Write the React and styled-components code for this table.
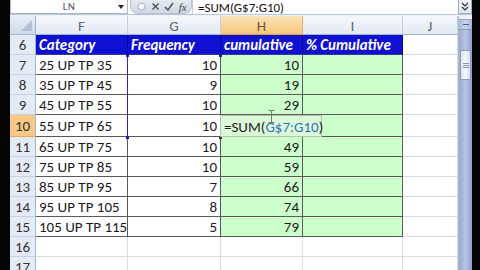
import React from "react";
import styled, { createGlobalStyle } from "styled-components";

const Global = createGlobalStyle`
  html, body { margin: 0; padding: 0; background: #000; }
  * { box-sizing: border-box; }
`;

const FONT = `"Carlito", "Liberation Sans", Arial, sans-serif`;

const Screen = styled.div`
  width: 480px;
  height: 270px;
  overflow: hidden;
  background: #000;
  display: flex;
  font-family: ${FONT};
`;

const LeftEdge = styled.div`
  width: 10px;
  flex: none;
  background: #050505;
`;

const Window = styled.div`
  width: 462px;
  flex: none;
  display: flex;
  flex-direction: column;
  background: #fff;
`;

const FormulaBar = styled.div`
  height: 15px;
  flex: none;
  display: flex;
  align-items: stretch;
  background: #fff;
  border-bottom: 1px solid #b9c6d8;
`;

const NameBox = styled.div`
  width: 118px;
  flex: none;
  position: relative;
  display: flex;
  align-items: center;
  justify-content: center;
  border: 1px solid #a9b7c9;
  border-top: none;
  font-size: 11px;
  color: #556;
  letter-spacing: 0.5px;
`;

const DropArrow = styled.span`
  position: absolute;
  right: 3px;
  top: 5px;
  width: 0;
  height: 0;
  border-left: 3px solid transparent;
  border-right: 3px solid transparent;
  border-top: 4px solid #222;
`;

const FxPill = styled.div`
  width: 62px;
  flex: none;
  margin-left: 2px;
  display: flex;
  align-items: center;
  justify-content: space-around;
  padding: 0 2px 0 4px;
  border-radius: 0 0 8px 8px;
  background: linear-gradient(#e6ebf2, #cfd8e4);
  border: 1px solid #b7c3d3;
  border-top: none;
`;

const FxLabel = styled.span`
  font-family: "Liberation Serif", serif;
  font-style: italic;
  font-size: 11px;
  color: #444;
`;

const FormulaInput = styled.div`
  flex: 1;
  display: flex;
  align-items: center;
  padding-left: 5px;
  font-size: 13px;
  color: #111;
  border-left: 1px solid #c4cfdc;
`;

const ExpandBtn = styled.div`
  width: 14px;
  flex: none;
  display: flex;
  align-items: center;
  justify-content: center;
  background: linear-gradient(#f4f6fa, #dde4ee);
  border: 1px solid #9fb0c6;
  border-top: none;
`;

const Gap = styled.div`
  height: 1px;
  flex: none;
  background: #f0f2f6;
`;

const SheetArea = styled.div`
  flex: 1;
  display: flex;
  min-height: 0;
`;

const Grid = styled.div`
  display: grid;
  grid-template-columns: 26px 92px 93px 82px 100px 55px;
  grid-template-rows: 19px 20px 20px 20px 20px 22px 20px 20px 20px 20px 20px 20px 20px;
  width: 448px;
  flex: none;
  background: #fff;
`;

const placed = (p) => `grid-row: ${p.$r}; grid-column: ${p.$c};`;

const Corner = styled.div`
  grid-row: 1;
  grid-column: 1;
  position: relative;
  background: linear-gradient(#e9eef6, #cfd9e8);
  border-right: 1px solid #9eb6ce;
  border-bottom: 1px solid #9eb6ce;
  &::after {
    content: "";
    position: absolute;
    right: 3px;
    bottom: 3px;
    width: 0;
    height: 0;
    border-left: 11px solid transparent;
    border-bottom: 11px solid #b4c1d4;
  }
`;

const ColHead = styled.div`
  ${placed}
  display: flex;
  align-items: center;
  justify-content: center;
  padding-top: 1px;
  font-size: 15px;
  color: ${(p) => (p.$active ? "#6b5a40" : "#5a6778")};
  background: ${(p) =>
    p.$active
      ? "linear-gradient(#fbe3b8, #f7c77a)"
      : "linear-gradient(#f6f8fc, #e3e9f2)"};
  border-right: 1px solid ${(p) => (p.$active ? "#e0b070" : "#c3cfdf")};
  border-bottom: 1px solid ${(p) => (p.$active ? "#e0a050" : "#9eb6ce")};
`;

const RowHead = styled.div`
  ${placed}
  display: flex;
  align-items: center;
  justify-content: center;
  padding-top: 1px;
  font-size: 15px;
  color: #333;
  background: ${(p) => (p.$active ? "#f8c886" : "#e4ebf6")};
  border-right: 1px solid #9eb6ce;
  border-bottom: 1px solid ${(p) => (p.$active ? "#e0a860" : "#c5d2e3")};
`;

const bgFor = (k) =>
  k === "head" ? "#1010d2" : k === "green" ? "#ccffcc" : "#ffffff";
const lineFor = (k) =>
  k === "head" ? "#08089a" : k === "empty" ? "#d6dce6" : "#5a5a5a";

const Cell = styled.div`
  ${placed}
  display: flex;
  align-items: center;
  justify-content: ${(p) => (p.$right ? "flex-end" : "flex-start")};
  padding: 1px 3px 0 3px;
  overflow: hidden;
  white-space: nowrap;
  font-size: 15px;
  color: ${(p) => (p.$kind === "head" ? "#fff" : "#1a1a1a")};
  font-weight: ${(p) => (p.$kind === "head" ? 700 : 400)};
  font-style: ${(p) => (p.$kind === "head" ? "italic" : "normal")};
  background: ${(p) => bgFor(p.$kind)};
  border-right: 1px solid ${(p) => lineFor(p.$kind)};
  border-bottom: 1px solid
    ${(p) => (p.$kind === "head" ? "#3a3a8a" : lineFor(p.$kind))};
`;

const RangeMark = styled.div`
  grid-column: 3 / 4;
  grid-row: 3 / 7;
  position: relative;
  margin-left: -1px;
  border-left: 1px solid #2a2ab8;
  pointer-events: none;
  z-index: 1;
`;

const Handle = styled.span`
  position: absolute;
  width: 3px;
  height: 3px;
  background: ${(p) => p.$color || "#1a1ab0"};
  ${(p) => (p.$top ? "top: -1px;" : "bottom: -2px;")}
  ${(p) => (p.$left ? "left: -2px;" : "right: -1px;")}
`;

const EditBox = styled.div`
  grid-column: 4 / 6;
  grid-row: 6 / 7;
  justify-self: start;
  width: 102px;
  margin-left: -1px;
  position: relative;
  z-index: 2;
  display: flex;
  align-items: center;
  padding: 1px 0 0 3px;
  font-size: 15px;
  color: #1a1a1a;
  white-space: nowrap;
  background: #dafada;
  border: 1px solid #b6c2a6;
`;

const Ref = styled.span`
  color: #3a6fb8;
`;

const Caret = styled.span`
  display: inline-block;
  width: 1px;
  height: 16px;
  margin-left: 1px;
  background: #111;
`;

const IBeam = styled.svg`
  position: absolute;
  left: 47px;
  top: -6px;
`;

const Scrollbar = styled.div`
  width: 14px;
  flex: none;
  display: flex;
  flex-direction: column;
  background: linear-gradient(90deg, #9aabd0, #b8c6e4 50%, #8fa2cc);
  border-left: 1px solid #b0b8c4;
`;

const ScrollTop = styled.div`
  height: 4px;
  background: #eef1f6;
  border-bottom: 1px solid #98a8c4;
`;

const ArrowBtn = styled.div`
  height: 10px;
  display: flex;
  align-items: center;
  justify-content: center;
  background: linear-gradient(90deg, #a9b9da, #c9d5ec, #a2b3d6);
  border-bottom: 1px solid #8a9cc2;
  &::after {
    content: "";
    width: 6px;
    height: 1px;
    background: #4d5f86;
  }
`;

const Track = styled.div`
  height: ${(p) => p.$h}px;
  flex: ${(p) => (p.$grow ? 1 : "none")};
`;

const Thumb = styled.div`
  height: 30px;
  margin: 0 1px;
  display: flex;
  flex-direction: column;
  align-items: center;
  justify-content: center;
  gap: 1px;
  background: linear-gradient(90deg, #dfe6f3, #f4f7fc, #d7e0ef);
  border: 1px solid #8b9dc3;
  border-radius: 2px;
`;

const Grip = styled.span`
  width: 6px;
  height: 1px;
  background: #8a98b4;
`;

const RightEdge = styled.div`
  flex: 1;
  background: #050505;
`;

const cols = ["F", "G", "H", "I", "J"];

const data = [
  ["25 UP TP 35", "10", "10"],
  ["35 UP TP 45", "9", "19"],
  ["45 UP TP 55", "10", "29"],
  ["55 UP TP 65", "10", null],
  ["65 UP TP 75", "10", "49"],
  ["75 UP TP 85", "10", "59"],
  ["85 UP TP 95", "7", "66"],
  ["95 UP TP 105", "8", "74"],
  ["105 UP TP 115", "5", "79"],
];

const heads = ["Category", "Frequency", "cumulative", "% Cumulative"];

export default function App() {
  return (
    <>
      <Global />
      <Screen>
        <LeftEdge />
        <Window>
          <FormulaBar>
            <NameBox>
              LN
              <DropArrow />
            </NameBox>
            <FxPill>
              <svg width="9" height="9" viewBox="0 0 9 9">
                <circle cx="4.5" cy="4.5" r="3.5" fill="#f4f6fa" stroke="#a9b4c4" />
              </svg>
              <svg width="9" height="9" viewBox="0 0 9 9">
                <path d="M1.5 1.5 L7.5 7.5 M7.5 1.5 L1.5 7.5" stroke="#4a4f5a" strokeWidth="1.4" />
              </svg>
              <svg width="10" height="9" viewBox="0 0 10 9">
                <path d="M1 5 L4 8 L9 1" fill="none" stroke="#4a4f5a" strokeWidth="1.4" />
              </svg>
              <FxLabel>fx</FxLabel>
            </FxPill>
            <FormulaInput>=SUM(G$7:G10)</FormulaInput>
            <ExpandBtn>
              <svg width="8" height="9" viewBox="0 0 8 9">
                <path d="M1 1 L4 4 L7 1 M1 5 L4 8 L7 5" fill="none" stroke="#333" strokeWidth="1.2" />
              </svg>
            </ExpandBtn>
          </FormulaBar>
          <Gap />
          <SheetArea>
            <Grid>
              <Corner />
              {cols.map((c, ci) => (
                <ColHead key={c} $r={1} $c={ci + 2} $active={c === "H"}>
                  {c}
                </ColHead>
              ))}

              <RowHead $r={2} $c={1}>6</RowHead>
              {heads.map((h, ci) => (
                <Cell key={h} $r={2} $c={ci + 2} $kind="head">
                  {h}
                </Cell>
              ))}
              <Cell $r={2} $c={6} $kind="empty" />

              {data.map(([cat, f, cum], i) => {
                const r = 7 + i;
                const gr = i + 3;
                return (
                  <React.Fragment key={r}>
                    <RowHead $r={gr} $c={1} $active={r === 10}>
                      {r}
                    </RowHead>
                    <Cell $r={gr} $c={2} $kind="white">
                      {cat}
                    </Cell>
                    <Cell $r={gr} $c={3} $kind="white" $right>
                      {f}
                    </Cell>
                    <Cell $r={gr} $c={4} $kind="green" $right>
                      {cum}
                    </Cell>
                    <Cell $r={gr} $c={5} $kind="green" />
                    <Cell $r={gr} $c={6} $kind="empty" />
                  </React.Fragment>
                );
              })}

              {[16, 17].map((r, i) => (
                <React.Fragment key={r}>
                  <RowHead $r={12 + i} $c={1}>
                    {r}
                  </RowHead>
                  {cols.map((c, ci) => (
                    <Cell key={c} $r={12 + i} $c={ci + 2} $kind="empty" />
                  ))}
                </React.Fragment>
              ))}

              <RangeMark>
                <Handle $top $left />
                <Handle $top $color="#22228a" />
                <Handle $left />
                <Handle $color="#333" />
              </RangeMark>

              <EditBox>
                =SUM(<Ref>G$7:G10</Ref>)
                <Caret />
                <IBeam width="7" height="13" viewBox="0 0 7 13">
                  <path d="M0.5 0.5 H6.5 M3.5 0.5 V12.5 M0.5 12.5 H6.5" stroke="#7a7a7a" strokeWidth="1" fill="none" />
                </IBeam>
              </EditBox>
            </Grid>
            <Scrollbar>
              <ScrollTop />
              <ArrowBtn />
              <Track $h={20} />
              <Thumb>
                <Grip />
                <Grip />
                <Grip />
              </Thumb>
              <Track $grow />
            </Scrollbar>
          </SheetArea>
        </Window>
        <RightEdge />
      </Screen>
    </>
  );
}
